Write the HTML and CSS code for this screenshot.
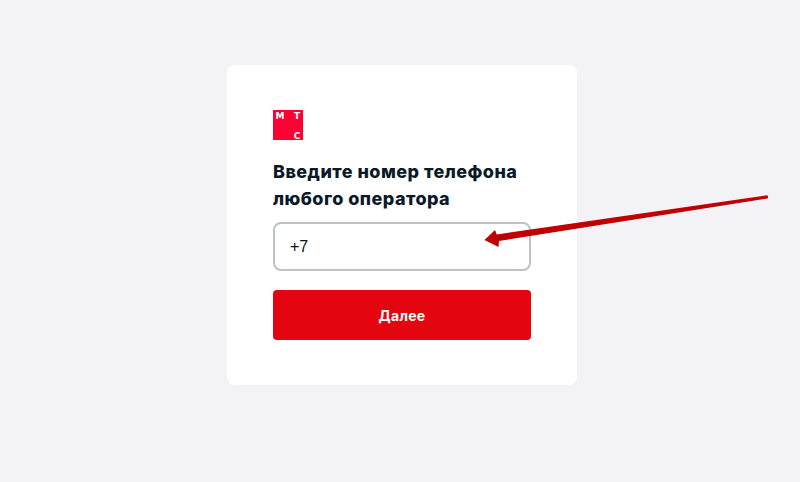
FILE: index.html
```html
<!DOCTYPE html>
<html lang="ru">
<head>
<meta charset="utf-8">
<title>МТС</title>
<link rel="stylesheet" href="styles.css">
</head>
<body>
<main class="page">
  <form class="card">
    <div class="logo">
      <span class="logo-m">М</span>
      <span class="logo-t">Т</span>
      <span class="logo-c">С</span>
    </div>
    <h1 class="title">Введите номер телефона любого оператора</h1>
    <div class="field">+7</div>
    <button class="submit" type="button">Далее</button>
  </form>
</main>
<svg class="arrow" width="800" height="482" viewBox="0 0 800 482" aria-hidden="true">
  <path class="arrow-shape" d="M767 195.2 Q769 196.5 767.5 198.4 L499 241 L498.5 247 L484.5 240 L495 230 L496.8 234.5 Z"/>
</svg>
</body>
</html>
```
FILE: styles.css
```css
* { box-sizing: border-box; }
html, body { margin: 0; height: 100%; }
body {
  background: #f2f2f7;
  font-family: Inter, "Liberation Sans", sans-serif;
  overflow: hidden;
}
.page {
  display: flex;
  justify-content: center;
  padding: 65px 223px 0 227px;
}
.card {
  width: 350px;
  height: 320px;
  padding: 45px 46px 0;
  background: #fff;
  border-radius: 8px;
}
.logo {
  width: 30px;
  height: 30px;
  padding: 1px 0 0 2px;
  display: grid;
  grid-template-columns: 10px 12px;
  grid-template-rows: 10px 10px;
  column-gap: 6px;
  row-gap: 10px;
  background: #ff0032;
  color: #fff;
  font-family: "DejaVu Sans", sans-serif;
  font-size: 9px;
  font-weight: 700;
  line-height: 10px;
  text-align: center;
}
.logo-m { grid-area: 1 / 1; }
.logo-t { grid-area: 1 / 2; }
.logo-c { grid-area: 2 / 2; }
.title {
  margin: 18px 0 10px;
  width: 258px;
  font-size: 18px;
  line-height: 27px;
  font-weight: 800;
  letter-spacing: 0.46px;
  color: #0c1a28;
}
.field {
  height: 49px;
  padding: 0 15px;
  display: flex;
  align-items: center;
  border: 2px solid #bcc1ca;
  border-radius: 8px;
  font-family: "Liberation Sans", sans-serif;
  font-size: 16px;
  color: #111;
}
.submit {
  display: block;
  width: 258px;
  height: 50px;
  margin-top: 19px;
  padding: 0;
  border: 0;
  border-radius: 4px;
  background: #e30611;
  color: #fff;
  font-family: inherit;
  font-size: 14px;
  font-weight: 700;
  letter-spacing: 0.3px;
}
.arrow { position: absolute; left: 0; top: 0; }
.arrow-shape { fill: #c00000; }
```
